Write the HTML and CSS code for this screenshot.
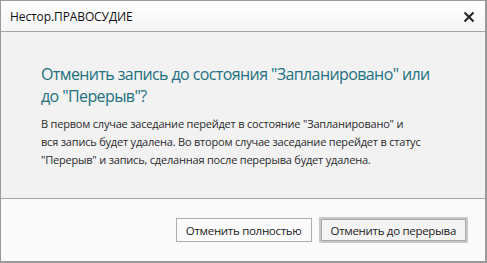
FILE: index.html
```html
<!DOCTYPE html>
<html>
<head>
<meta charset="utf-8">
<link rel="stylesheet" href="styles.css">
</head>
<body>
<div class="window">
  <div class="titlebar">
    <span class="title">Нестор.ПРАВОСУДИЕ</span>
    <svg class="close" width="12" height="12" viewBox="0 0 12 12"><path d="M1.5 1.5 L10.5 10.5 M10.5 1.5 L1.5 10.5" stroke="#222" stroke-width="2" fill="none"/></svg>
  </div>
  <div class="content">
    <div class="heading">Отменить запись до состояния "Запланировано" или<br>до "Перерыв"?</div>
    <div class="text">В первом случае заседание перейдет в состояние "Запланировано" и<br>вся запись будет удалена. Во втором случае заседание перейдет в статус<br>"Перерыв" и запись, сделанная после перерыва будет удалена.</div>
  </div>
  <div class="footer">
    <button class="btn">Отменить полностью</button>
    <button class="btn default">Отменить до перерыва</button>
  </div>
</div>
</body>
</html>
```
FILE: styles.css
```css
html, body {
  margin: 0;
  padding: 0;
  background: #ffffff;
}
.window {
  width: 484px;
  height: 260px;
  border: 1px solid #9a9a9a;
  border-right-width: 2px;
  border-bottom-width: 2px;
  display: flex;
  flex-direction: column;
  font-family: "Open Sans", "Noto Sans", sans-serif;
  box-sizing: content-box;
}
.titlebar {
  height: 30px;
  background: linear-gradient(#ffffff, #f4f4f4);
  border-bottom: 1px solid #a6a6a6;
  display: flex;
  align-items: center;
  justify-content: space-between;
  padding: 0 10px 0 9px;
}
.title {
  font-size: 12px;
  color: #111;
  letter-spacing: -0.1px;
}
.close {
  margin-top: 1px;
}
.content {
  height: 167px;
  flex: none;
  background: #f2f2f2;
  border-bottom: 1px solid #a6a6a6;
  padding: 0 10px 0 40px;
  box-sizing: border-box;
}
.heading {
  margin-top: 31px;
  font-size: 16px;
  line-height: 22px;
  letter-spacing: -0.6px;
  color: #23707f;
  white-space: nowrap;
}
.text {
  margin-top: 8px;
  font-size: 11px;
  line-height: 18px;
  letter-spacing: -0.2px;
  color: #2a2a2a;
  white-space: nowrap;
}
.footer {
  flex: 1;
  background: #fafafa;
  display: flex;
  justify-content: flex-end;
  align-items: flex-start;
  padding: 19px 17px 0 0;
  gap: 7px;
}
.btn {
  font-family: inherit;
  font-size: 11.5px;
  letter-spacing: -0.3px;
  color: #222;
  background: #fbfbfb;
  border: 1px solid #adadad;
  height: 24px;
  padding: 0 9px;
  margin: 0;
}
.btn.default {
  border: 2px solid #c8c8c8;
  outline: 1px solid #a8a8a8;
  outline-offset: -3px;
  height: 26px;
  margin-top: -1px;
  padding: 0 10px;
  background: #f4f4f4;
}
```
